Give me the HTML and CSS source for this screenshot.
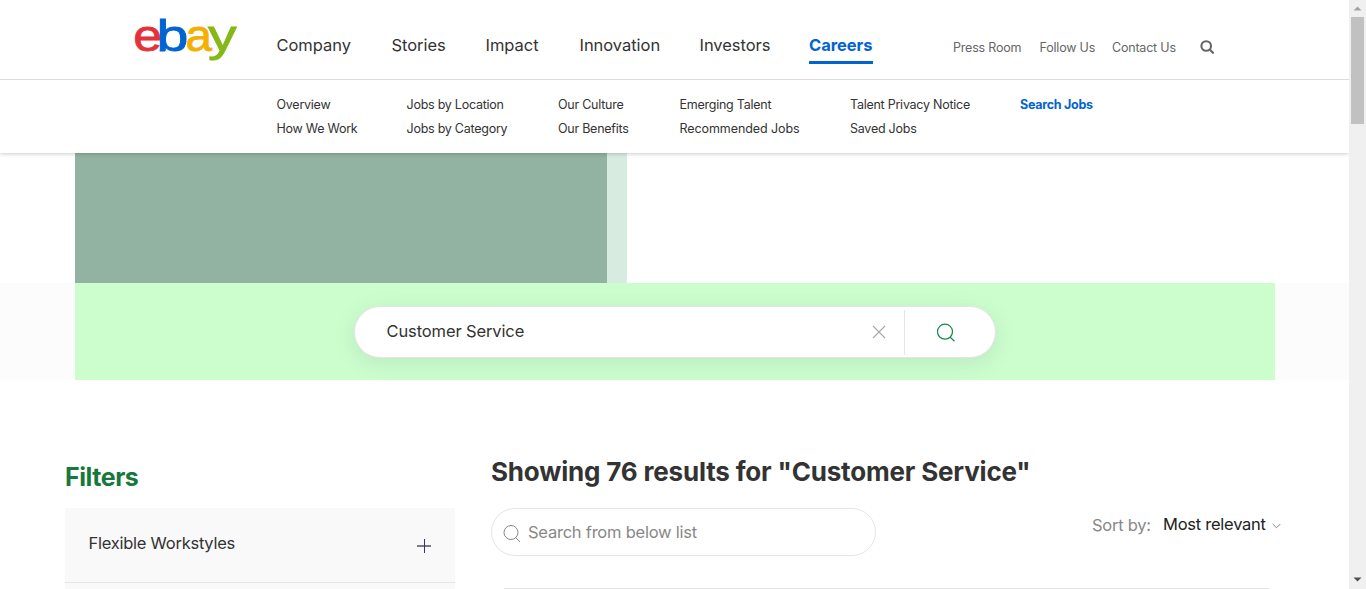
FILE: index.html
```html
<!DOCTYPE html>
<html lang="en">
<head>
<meta charset="utf-8">
<title>Search Jobs - eBay Careers</title>
<link rel="stylesheet" href="styles.css">
</head>
<body>
<div class="page">
  <header class="header">
    <div class="topbar">
      <svg class="logo" width="104" height="46" viewBox="0 0 104 46" role="img" aria-label="ebay">
        <text class="logo-e" transform="translate(-1.8 35.4) scale(1.16 1)">e</text>
        <text class="logo-b" transform="translate(21.6 35.4) scale(1.29 1)">b</text>
        <text class="logo-a" transform="translate(50.6 35.4) scale(1.07 1)">a</text>
        <text class="logo-y" transform="translate(73 34.8) scale(1.29 1)">y</text>
      </svg>
      <nav class="main-nav">
        <a>Company</a><a>Stories</a><a>Impact</a><a>Innovation</a><a>Investors</a><a class="active">Careers</a>
      </nav>
      <nav class="util-nav">
        <a>Press Room</a><a>Follow Us</a><a>Contact Us</a>
        <svg width="15" height="15" viewBox="0 0 15 15"><circle cx="6.2" cy="6" r="4.8"/><path d="M9.8 9.6 13.6 13.4"/></svg>
      </nav>
    </div>
    <nav class="sub-nav">
      <div><a>Overview</a><a>How We Work</a></div>
      <div><a>Jobs by Location</a><a>Jobs by Category</a></div>
      <div><a>Our Culture</a><a>Our Benefits</a></div>
      <div><a>Emerging Talent</a><a class="wide">Recommended Jobs</a></div>
      <div><a>Talent Privacy Notice</a><a>Saved Jobs</a></div>
      <div><a class="active">Search Jobs</a></div>
    </nav>
  </header>
  <section class="hero"><div class="hero-panel"></div></section>
  <section class="search-band">
    <div class="search-inner">
      <div class="search-box">
        <span class="query">Customer Service</span>
        <svg class="clear" width="14" height="14" viewBox="0 0 14 14"><path d="M1 1 13 13M13 1 1 13"/></svg>
        <span class="search-btn"><svg width="20" height="20" viewBox="0 0 20 20"><circle cx="9" cy="8.7" r="7.5"/><path d="M14 14 18.5 18.2"/></svg></span>
      </div>
    </div>
  </section>
  <main class="content">
    <aside class="filters">
      <h2>Filters</h2>
      <div class="filter-row">
        <span>Flexible Workstyles</span>
        <svg width="14" height="14" viewBox="0 0 14 14"><path class="bar-h" d="M0 7H14"/><path class="bar-v" d="M7.5 0V14"/></svg>
      </div>
      <div class="filter-row"></div>
    </aside>
    <section class="results">
      <h1>Showing 76 results for "Customer Service"</h1>
      <div class="toolbar">
        <div class="list-search">
          <svg width="18" height="18" viewBox="0 0 18 18"><circle cx="8" cy="7.5" r="7"/><path d="M12.8 12.8 17 16.8"/></svg>
          <span>Search from below list</span>
        </div>
        <div class="sort">
          <span class="sort-label">Sort by:</span>
          <span class="sort-value">Most relevant</span>
          <svg width="9" height="6" viewBox="0 0 9 6"><path d="M.7 1 4.5 4.8 8.3 1"/></svg>
        </div>
      </div>
      <div class="rule"></div>
    </section>
  </main>
</div>
<div class="scrollbar">
  <svg width="9" height="5" viewBox="0 0 9 5"><path d="M4.5 .5 8.5 4.5H.5Z"/></svg>
  <div class="thumb"></div>
  <svg class="down" width="9" height="5" viewBox="0 0 9 5"><path d="M.5 .5H8.5L4.5 4.5Z"/></svg>
</div>
</body>
</html>
```

FILE: styles.css
```css
* { box-sizing: border-box; }
body {
  margin: 0;
  display: flex;
  height: 589px;
  overflow: hidden;
  background: #fff;
  color: #333;
  font-family: Inter, "Liberation Sans", sans-serif;
}
a, span, h1, h2 { white-space: nowrap; }
svg { display: block; flex: none; fill: none; }
.page { width: 1349px; height: 589px; overflow: hidden; }

.header {
  position: relative;
  height: 153px;
  background: #fff;
  box-shadow: 0 1px 4px rgba(0, 0, 0, .2);
}
.topbar {
  display: flex;
  height: 80px;
  padding-left: 135px;
  border-bottom: 1px solid #dcdcdc;
}
.logo { margin-top: 16px; overflow: visible; font: 44.5px "Liberation Sans", Arial, sans-serif; stroke-width: .8px; }
.logo-e { fill: #e53238; stroke: #e53238; }
.logo-b { fill: #0064d2; stroke: #0064d2; }
.logo-a { fill: #f5af02; stroke: #f5af02; }
.logo-y { fill: #86b817; stroke: #86b817; }

.main-nav {
  display: grid;
  grid-template-columns: 75px 54px 54px 80px 70px 64px;
  column-gap: 40px;
  margin-left: 37px;
  padding-top: 34px;
  font-size: 16.5px;
  line-height: 23px;
  letter-spacing: -.04px;
}
.main-nav a { height: 30px; padding-left: .5px; }
.main-nav .active {
  padding-left: 0;
  border-bottom: 3px solid #0064d2;
  color: #0064d2;
  font-weight: 700;
  letter-spacing: -.05px;
}
.util-nav {
  display: grid;
  grid-template-columns: 68.5px 54.5px 70px 15px;
  column-gap: 18px;
  margin-left: 80px;
  padding-top: 40px;
  color: #666;
  font-size: 12.5px;
  line-height: 16px;
  letter-spacing: -.2px;
}
.util-nav svg { stroke: #666; stroke-width: 2.1; }

.sub-nav {
  display: grid;
  grid-template-columns: 80px 101.5px 71.5px 120.5px 120px 74px;
  column-gap: 50px;
  padding: 13px 0 0 276.5px;
  font-size: 12.5px;
  line-height: 24px;
  letter-spacing: -.25px;
}
.sub-nav a { display: block; }
.sub-nav .wide { letter-spacing: -.08px; }
.sub-nav .active { color: #0064d2; font-weight: 700; letter-spacing: -.27px; }

.hero { height: 130px; padding-left: 75px; }
.hero-panel {
  width: 552px;
  height: 130px;
  background: #92b2a2;
  border-right: 20px solid #d8ebe0;
}
.search-band { height: 97px; padding: 0 74px 0 75px; background: #fcfcfc; }
.search-inner {
  height: 97px;
  padding: 23px 279px 0 279px;
  background: #cbfdcd;
}
.search-box {
  display: flex;
  align-items: center;
  height: 52px;
  border: 1px solid #e5e5e5;
  border-radius: 26px;
  background: #fff;
  box-shadow: 0 5px 20px rgba(101, 119, 134, .14);
}
.query { flex: 1; padding-left: 31.5px; font-size: 16.5px; letter-spacing: -.12px; line-height: 22px; margin-top: -3px; }
.clear { margin: 0 18px 0 0; stroke: #aaa; stroke-width: 1.2; }
.search-btn {
  display: flex;
  align-items: center;
  width: 91px;
  height: 45px;
  padding-left: 31px;
  border-left: 1px solid #e5e5e5;
}
.search-btn svg { margin-top: 1px; stroke: #138b4a; stroke-width: 1.2; }

.content { display: flex; gap: 36px; padding-left: 65px; }
.filters { width: 390px; padding-top: 79px; }
.filters h2 { margin: 0; height: 49px; color: #17783c; font-size: 25px; line-height: 37px; letter-spacing: -.45px; }
.filter-row {
  display: flex;
  justify-content: space-between;
  height: 75px;
  padding: 24px 24px 0 23.5px;
  border-bottom: 1px solid #e6e6e6;
  background: #f9f9f9;
  font-size: 16.5px;
  line-height: 23px;
  letter-spacing: -.25px;
}
.filter-row svg { margin-top: 7px; }
.bar-h { stroke: #7d7a87; stroke-width: 2; }
.bar-v { stroke: #35327c; stroke-width: 1; }

.results { width: 790px; padding-top: 72px; }
.results h1 { margin: 0; height: 56px; font-size: 26px; line-height: 40px; letter-spacing: -.18px; }
.toolbar { display: flex; justify-content: space-between; height: 80px; }
.list-search {
  display: flex;
  gap: 7.5px;
  width: 385px;
  height: 48px;
  padding: 12px 0 0 10.5px;
  border: 1px solid #e5e5e5;
  border-radius: 24px;
  color: #888;
  font-size: 16.5px;
  line-height: 23px;
  letter-spacing: -.23px;
}
.list-search svg { margin-top: 4px; stroke: #888; stroke-width: 1; }
.sort { display: grid; grid-template-columns: 71px 109px 9px; padding-top: 6px; font-size: 16.5px; line-height: 23px; letter-spacing: -.25px; }
.sort-label { color: #888; }
.sort-value { margin-top: -1px; color: #222; }
.sort svg { margin-top: 9px; stroke: #888; stroke-width: 1; }
.rule { width: 765px; margin-left: 13px; height: 1px; background: #e5e5e5; }

.scrollbar {
  display: flex;
  flex-direction: column;
  align-items: center;
  width: 17px;
  height: 589px;
  padding: 6px 0 7px;
  background: #f0f0f0;
}
.scrollbar svg { fill: #a3a3a3; }
.scrollbar .down { margin-top: auto; fill: #505050; }
.thumb { width: 13px; height: 107px; margin-top: 6px; background: #c1c1c1; }
```
